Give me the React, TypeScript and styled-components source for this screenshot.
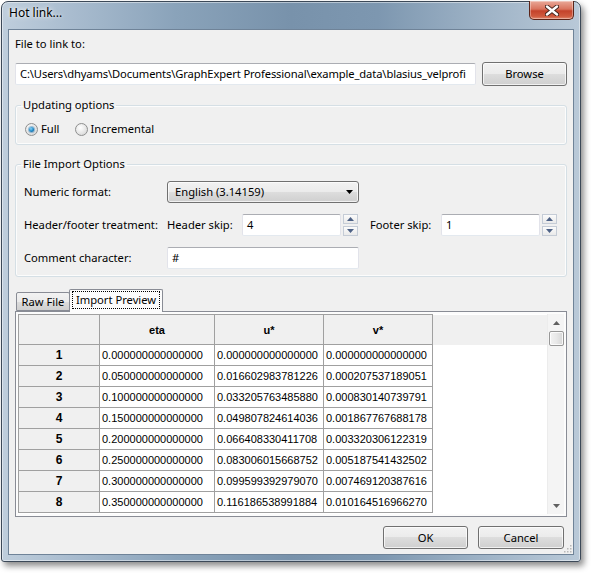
import React from "react";
import styled, { createGlobalStyle } from "styled-components";

const GlobalStyle = createGlobalStyle`
  html, body { margin: 0; padding: 0; background: #ffffff; }
  body {
    font-family: "Noto Sans", "Liberation Sans", sans-serif;
    font-size: 11.2px;
    color: #000;
  }
  * { box-sizing: border-box; }
`;

const Page = styled.div`
  width: 593px;
  height: 574px;
  padding: 1px 0 0 1px;
`;

const Window = styled.div`
  width: 580px;
  height: 561px;
  display: flex;
  flex-direction: column;
  border: 1px solid #3c4958;
  border-radius: 7px 7px 3px 3px;
  background: linear-gradient(
    90deg,
    #bfcedc 0%,
    #a9bccf 12%,
    #8aa3ba 30%,
    #7892ab 50%,
    #7d97b0 65%,
    #a1b5c8 85%,
    #b9c9d8 100%
  );
  box-shadow: 3px 4px 6px rgba(0, 0, 0, 0.45), inset 0 0 0 1px rgba(255, 255, 255, 0.45);
  padding: 0 6px 6px 6px;
`;

const TitleBar = styled.div`
  height: 27px;
  display: flex;
  justify-content: space-between;
  align-items: flex-start;
`;

const Title = styled.span`
  margin-top: 3px;
  padding-left: 1px;
  font-size: 12px;
  line-height: 16px;
  color: #000;
  text-shadow: 0 0 6px rgba(255, 255, 255, 0.9), 0 0 3px rgba(255, 255, 255, 0.8);
`;

const CloseButton = styled.div`
  width: 45px;
  height: 19px;
  margin-top: -1px;
  border: 1px solid #5b2418;
  border-top: none;
  border-radius: 0 0 5px 5px;
  background: linear-gradient(180deg, #e9a898 0%, #d9735d 45%, #c4432b 55%, #cf5a3e 85%, #e08a70 100%);
  box-shadow: inset 0 0 0 1px rgba(255, 255, 255, 0.35);
  display: flex;
  align-items: center;
  justify-content: center;
`;

const Client = styled.div`
  flex: 1;
  display: flex;
  flex-direction: column;
  background: #f0f0f0;
  border: 1px solid #6f8398;
  padding: 6px 6px 5px 6px;
  position: relative;
`;

const Label = styled.span`
  line-height: 16px;
  height: 16px;
  white-space: nowrap;
`;

const PathRow = styled.div`
  margin-top: 10px;
  height: 24px;
  display: flex;
  align-items: center;
  gap: 6px;
`;

const TextBox = styled.div<{ $w?: number; $tight?: boolean }>`
  height: 22px;
  ${(p) => (p.$w ? `width: ${p.$w}px; flex: none;` : "flex: 1; min-width: 0;")}
  background: #fff;
  border: 1px solid #e2e3ea;
  border-top-color: #abadb3;
  border-bottom-color: #e3e9ef;
  border-radius: 2px;
  padding: 0 2px 0 4px;
  line-height: 20px;
  white-space: nowrap;
  overflow: hidden;
  letter-spacing: ${(p) => (p.$tight ? "-0.12px" : "normal")};
`;

const PushButton = styled.div<{ $w: number; $h: number }>`
  width: ${(p) => p.$w}px;
  height: ${(p) => p.$h}px;
  flex: none;
  border: 1px solid #707070;
  border-radius: 3px;
  background: linear-gradient(180deg, #f2f2f2 0%, #ebebeb 49%, #dddddd 50%, #cfcfcf 100%);
  box-shadow: inset 0 0 0 1px rgba(255, 255, 255, 0.7);
  display: flex;
  align-items: center;
  justify-content: center;
  line-height: 16px;
`;

const Group = styled.fieldset<{ $mt: number; $pt: number }>`
  margin: ${(p) => p.$mt}px 0 0 0;
  padding: ${(p) => p.$pt}px 8px 7px 8px;
  border: 1px solid #d5dfe5;
  border-radius: 3px;
  box-shadow: inset 0 0 0 1px rgba(255, 255, 255, 0.8);
  min-width: 0;
`;

const Legend = styled.legend`
  padding: 0 2px;
  margin-left: -3px;
  line-height: 16px;
  font-size: 11.2px;
`;

const RadioRow = styled.div`
  display: flex;
  align-items: center;
  height: 16px;
  padding-left: 1px;
`;

const RadioItem = styled.label`
  display: flex;
  align-items: center;
  gap: 3px;
  margin-right: 15px;
  line-height: 16px;
`;

const RadioCircle = styled.span<{ $on?: boolean }>`
  width: 13px;
  height: 13px;
  border-radius: 50%;
  border: 1px solid #8e8f8f;
  background: radial-gradient(circle at 40% 35%, #ffffff 0%, #e6e6e6 55%, #cfcfcf 100%);
  display: flex;
  align-items: center;
  justify-content: center;
  &::after {
    content: "";
    display: ${(p) => (p.$on ? "block" : "none")};
    width: 5px;
    height: 5px;
    border-radius: 50%;
    background: radial-gradient(circle at 40% 35%, #8ad2f5 0%, #1b86c6 55%, #0d4f7e 100%);
    box-shadow: 0 0 1px 1px rgba(20, 100, 160, 0.45);
  }
`;

const FormGrid = styled.div`
  display: grid;
  grid-template-columns: 143px 1fr;
  grid-auto-rows: 22px;
  row-gap: 11px;
  align-items: center;
`;

const Inline = styled.div`
  display: flex;
  align-items: center;
`;

const SelectBox = styled.div`
  width: 192px;
  height: 22px;
  border: 1px solid #707070;
  border-radius: 3px;
  background: linear-gradient(180deg, #f2f2f2 0%, #ebebeb 49%, #dddddd 50%, #cfcfcf 100%);
  box-shadow: inset 0 0 0 1px rgba(255, 255, 255, 0.7);
  display: flex;
  align-items: center;
  justify-content: space-between;
  padding: 0 5px 0 7px;
  line-height: 16px;
`;

const SubLabel = styled.span<{ $w: number }>`
  width: ${(p) => p.$w}px;
  flex: none;
  line-height: 16px;
  white-space: nowrap;
`;

const Spinner = styled.div`
  width: 15px;
  height: 22px;
  margin-left: 2px;
  display: flex;
  flex-direction: column;
  justify-content: space-between;
  flex: none;
`;

const SpinBtn = styled.div`
  height: 10px;
  border: 1px solid #c5ccd6;
  background: linear-gradient(180deg, #fbfbfb 0%, #eaeaea 100%);
  display: flex;
  align-items: center;
  justify-content: center;
`;

const Gap = styled.span<{ $w: number }>`
  width: ${(p) => p.$w}px;
  flex: none;
`;

const TabBar = styled.div`
  margin-top: 12px;
  height: 22px;
  display: flex;
  align-items: flex-end;
  padding-left: 1px;
  position: relative;
  z-index: 1;
`;

const Tab = styled.div<{ $active?: boolean; $w: number }>`
  width: ${(p) => p.$w}px;
  height: ${(p) => (p.$active ? 23 : 19)}px;
  margin-bottom: ${(p) => (p.$active ? -1 : 0)}px;
  border: 1px solid #898c95;
  border-bottom: ${(p) => (p.$active ? "none" : "1px solid #898c95")};
  border-radius: 2px 2px 0 0;
  margin-left: ${(p) => (p.$active ? -1 : 0)}px;
  background: ${(p) =>
    p.$active ? "#fcfcfc" : "linear-gradient(180deg, #f2f2f2 0%, #ebebeb 50%, #dddddd 51%, #cfcfcf 100%)"};
  display: flex;
  align-items: ${(p) => (p.$active ? "flex-start" : "center")};
  justify-content: center;
  padding-top: ${(p) => (p.$active ? 2 : 0)}px;
  line-height: 16px;
`;

const FocusText = styled.span`
  outline: 1px dotted #000;
  outline-offset: 0px;
  padding: 0 3px;
`;

const Panel = styled.div`
  flex: 1;
  min-height: 0;
  border: 1px solid #898c95;
  background: #fcfcfc;
  padding: 2px;
  display: flex;
`;

const TableArea = styled.div`
  flex: 1;
  overflow: hidden;
  background: #fff;
`;

const Grid = styled.table`
  border-collapse: collapse;
  width: 100%;
  font-family: "Liberation Sans", Arial, sans-serif;
  font-size: 11px;
  table-layout: fixed;
`;

const HeadCell = styled.th<{ $w?: number }>`
  ${(p) => (p.$w ? `width: ${p.$w}px;` : "")}
  height: 30px;
  background: #f0f0f0;
  border: 1px solid #a0a0a0;
  font-weight: bold;
  text-align: center;
  padding: 0;
`;

const FillHead = styled.th`
  background: #f0f0f0;
  border: none;
  border-left: 1px solid #a0a0a0;
`;

const RowHead = styled.td`
  height: 21px;
  background: #f0f0f0;
  border: 1px solid #a0a0a0;
  text-align: center;
  font-weight: bold;
  font-size: 12px;
  padding: 0;
`;

const Cell = styled.td`
  height: 21px;
  border: 1px solid #a0a0a0;
  padding: 0 2px;
  white-space: nowrap;
  overflow: hidden;
`;

const FillCell = styled.td`
  border: none;
  border-left: 1px solid #a0a0a0;
`;

const ScrollBar = styled.div`
  width: 17px;
  flex: none;
  background: #f4f4f4;
  border-left: 1px solid #ececec;
  display: flex;
  flex-direction: column;
  align-items: center;
`;

const ScrollArrow = styled.div`
  width: 17px;
  height: 17px;
  display: flex;
  align-items: center;
  justify-content: center;
  flex: none;
`;

const Thumb = styled.div`
  width: 15px;
  height: 15px;
  border: 1px solid #979797;
  border-radius: 2px;
  background: linear-gradient(90deg, #f3f3f3 0%, #e8e8e8 50%, #d6d6d6 100%);
  box-shadow: inset 0 0 0 1px rgba(255, 255, 255, 0.8);
`;

const Track = styled.div`
  flex: 1;
`;

const ButtonRow = styled.div`
  margin-top: 9px;
  display: flex;
  justify-content: flex-end;
  gap: 10px;
  padding-right: 3px;
`;

const Grip = styled.svg`
  position: absolute;
  right: 1px;
  bottom: 1px;
`;

const rows: string[][] = [
  ["0.000000000000000", "0.000000000000000", "0.000000000000000"],
  ["0.050000000000000", "0.016602983781226", "0.000207537189051"],
  ["0.100000000000000", "0.033205763485880", "0.000830140739791"],
  ["0.150000000000000", "0.049807824614036", "0.001867767688178"],
  ["0.200000000000000", "0.066408330411708", "0.003320306122319"],
  ["0.250000000000000", "0.083006015668752", "0.005187541432502"],
  ["0.300000000000000", "0.099599392979070", "0.007469120387616"],
  ["0.350000000000000", "0.116186538991884", "0.010164516966270"],
];

const Up = ({ c = "#4d6185" }: { c?: string }) => (
  <svg width="7" height="4" viewBox="0 0 7 4">
    <path d="M0 4 L3.5 0 L7 4 Z" fill={c} />
  </svg>
);
const Down = ({ c = "#4d6185" }: { c?: string }) => (
  <svg width="7" height="4" viewBox="0 0 7 4">
    <path d="M0 0 L3.5 4 L7 0 Z" fill={c} />
  </svg>
);

const SpinBox = () => (
  <Spinner>
    <SpinBtn>
      <Up />
    </SpinBtn>
    <SpinBtn>
      <Down />
    </SpinBtn>
  </Spinner>
);

export default function App() {
  return (
    <Page>
      <GlobalStyle />
      <Window>
        <TitleBar>
          <Title>Hot link...</Title>
          <CloseButton>
            <svg width="14" height="11" viewBox="0 0 14 11">
              <path d="M2 1.5 L12 9.5 M12 1.5 L2 9.5" stroke="#40231c" strokeWidth="4.2" strokeLinecap="round" />
              <path d="M2 1.5 L12 9.5 M12 1.5 L2 9.5" stroke="#ffffff" strokeWidth="2.4" strokeLinecap="round" />
            </svg>
          </CloseButton>
        </TitleBar>
        <Client>
          <Label>File to link to:</Label>
          <PathRow>
            <TextBox $tight>C:\Users\dhyams\Documents\GraphExpert Professional\example_data\blasius_velprofi</TextBox>
            <PushButton $w={85} $h={24}>Browse</PushButton>
          </PathRow>

          <Group $mt={11} $pt={8}>
            <Legend>Updating options</Legend>
            <RadioRow>
              <RadioItem>
                <RadioCircle $on />
                Full
              </RadioItem>
              <RadioItem>
                <RadioCircle />
                Incremental
              </RadioItem>
            </RadioRow>
          </Group>

          <Group $mt={11} $pt={9}>
            <Legend>File Import Options</Legend>
            <FormGrid>
              <Label>Numeric format:</Label>
              <SelectBox>
                <span>English (3.14159)</span>
                <Down c="#000" />
              </SelectBox>
              <Label>Header/footer treatment:</Label>
              <Inline>
                <SubLabel $w={75}>Header skip:</SubLabel>
                <TextBox $w={99}>4</TextBox>
                <SpinBox />
                <Gap $w={12} />
                <SubLabel $w={71}>Footer skip:</SubLabel>
                <TextBox $w={99}>1</TextBox>
                <SpinBox />
              </Inline>
              <Label>Comment character:</Label>
              <TextBox $w={192}>#</TextBox>
            </FormGrid>
          </Group>

          <TabBar>
            <Tab $w={54}>Raw File</Tab>
            <Tab $w={94} $active>
              <FocusText>Import Preview</FocusText>
            </Tab>
          </TabBar>
          <Panel>
            <TableArea>
              <Grid>
                <thead>
                  <tr>
                    <HeadCell $w={81}></HeadCell>
                    <HeadCell $w={115}>eta</HeadCell>
                    <HeadCell $w={109}>u*</HeadCell>
                    <HeadCell $w={109}>v*</HeadCell>
                    <FillHead />
                  </tr>
                </thead>
                <tbody>
                  {rows.map((r, i) => (
                    <tr key={i}>
                      <RowHead>{i + 1}</RowHead>
                      {r.map((v, j) => (
                        <Cell key={j}>{v}</Cell>
                      ))}
                      <FillCell />
                    </tr>
                  ))}
                </tbody>
              </Grid>
            </TableArea>
            <ScrollBar>
              <ScrollArrow>
                <Up c="#606060" />
              </ScrollArrow>
              <Thumb />
              <Track />
              <ScrollArrow>
                <Down c="#606060" />
              </ScrollArrow>
            </ScrollBar>
          </Panel>

          <ButtonRow>
            <PushButton $w={85} $h={23}>OK</PushButton>
            <PushButton $w={86} $h={23}>Cancel</PushButton>
          </ButtonRow>
          <Grip width="10" height="10" viewBox="0 0 10 10">
            {[
              [8, 2],
              [8, 5],
              [8, 8],
              [5, 5],
              [5, 8],
              [2, 8],
            ].map(([x, y], k) => (
              <rect key={k} x={x} y={y} width="1.5" height="1.5" fill="#b8b8b8" />
            ))}
          </Grip>
        </Client>
      </Window>
    </Page>
  );
}
